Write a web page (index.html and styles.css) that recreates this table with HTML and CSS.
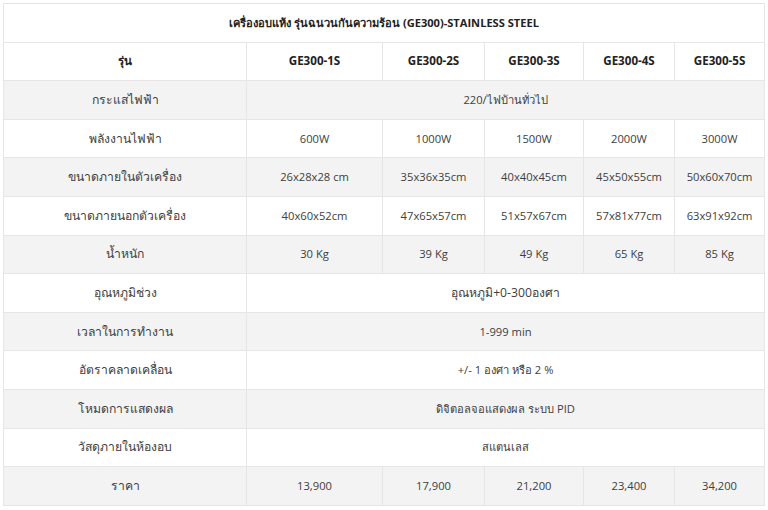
FILE: index.html
```html
<!DOCTYPE html>
<html lang="th">
<head>
<meta charset="utf-8">
<title>GE300</title>
<link rel="stylesheet" href="styles.css">
</head>
<body>
<table class="spec">
  <colgroup>
    <col class="c0"><col class="c1"><col class="c2"><col class="c3"><col class="c4"><col class="c5">
  </colgroup>
  <tr class="title"><th colspan="6">เครื่องอบแห้ง รุ่นฉนวนกันความร้อน (GE300)-STAINLESS STEEL</th></tr>
  <tr class="head"><th class="label">รุ่น</th><th>GE300-1S</th><th>GE300-2S</th><th>GE300-3S</th><th>GE300-4S</th><th>GE300-5S</th></tr>
  <tr class="alt"><td class="label">กระแสไฟฟ้า</td><td colspan="5">220/ไฟบ้านทั่วไป</td></tr>
  <tr><td class="label">พลังงานไฟฟ้า</td><td>600W</td><td>1000W</td><td>1500W</td><td>2000W</td><td>3000W</td></tr>
  <tr class="alt"><td class="label">ขนาดภายในตัวเครื่อง</td><td>26x28x28 cm</td><td>35x36x35cm</td><td>40x40x45cm</td><td>45x50x55cm</td><td>50x60x70cm</td></tr>
  <tr><td class="label">ขนาดภายนอกตัวเครื่อง</td><td>40x60x52cm</td><td>47x65x57cm</td><td>51x57x67cm</td><td>57x81x77cm</td><td>63x91x92cm</td></tr>
  <tr class="alt"><td class="label">น้ำหนัก</td><td>30 Kg</td><td>39 Kg</td><td>49 Kg</td><td>65 Kg</td><td>85 Kg</td></tr>
  <tr><td class="label">อุณหภูมิช่วง</td><td colspan="5" class="thai">อุณหภูมิ+0-300องศา</td></tr>
  <tr class="alt"><td class="label">เวลาในการทำงาน</td><td colspan="5">1-999 min</td></tr>
  <tr><td class="label">อัตราคลาดเคลื่อน</td><td colspan="5">+/- 1 องศา หรือ 2 %</td></tr>
  <tr class="alt"><td class="label">โหมดการแสดงผล</td><td colspan="5">ดิจิตอลจอแสดงผล ระบบ PID</td></tr>
  <tr><td class="label">วัสดุภายในห้องอบ</td><td colspan="5">สแตนเลส</td></tr>
  <tr class="alt"><td class="label">ราคา</td><td>13,900</td><td>17,900</td><td>21,200</td><td>23,400</td><td>34,200</td></tr>
</table>
</body>
</html>
```
FILE: styles.css
```css
html, body {
  margin: 0;
  padding: 0;
  background: #ffffff;
}
body {
  padding: 3px 4px 0 3px;
  font-family: "Open Sans", "Noto Sans", sans-serif;
  font-size: 11.2px;
  color: #404040;
}
.spec {
  width: 761px;
  table-layout: fixed;
  border-collapse: collapse;
  border: 1px solid #e6e6e6;
}
.c0 { width: 243px; }
.c1 { width: 136px; }
.c2 { width: 102px; }
.c3 { width: 99px; }
.c4 { width: 91px; }
.c5 { width: 90px; }
.spec tr { height: 38.6px; }
.spec th, .spec td {
  border: 1px solid #e6e6e6;
  text-align: center;
  vertical-align: middle;
  padding: 0 4px;
  line-height: 16px;
}
.spec th {
  font-size: 11.6px;
  font-weight: 700;
  color: #222;
}
.spec .title th {
  font-size: 11.1px;
}
.spec td.label,
.spec td.thai {
  font-size: 12.2px;
}
.spec .alt td {
  background: #f3f3f3;
}
```
